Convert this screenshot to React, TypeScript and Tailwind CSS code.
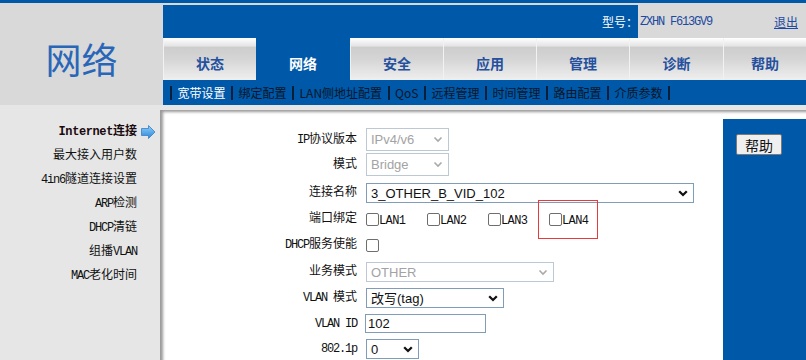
import React from "react";

const MONO = "font-['Liberation_Mono','Noto_Sans_CJK_SC',monospace]";
const SANS = "font-['Liberation_Sans','Noto_Sans_CJK_SC',sans-serif]";
const CJK = "font-['Noto_Sans_CJK_SC','Liberation_Sans',sans-serif]";

function M({ t, bold }: { t: string; bold?: boolean }) {
  const parts = t.split(/([\x20-\x7E]+)/).filter(Boolean);
  return (
    <>
      {parts.map((p, i) =>
        /[\x20-\x7E]/.test(p[0]) ? (
          <span key={i} className={bold ? "tracking-[-0.4px]" : "tracking-[-1.2px]"}>
            {p}
          </span>
        ) : (
          <span key={i}>{p}</span>
        )
      )}
    </>
  );
}

function Chevron({ disabled }: { disabled?: boolean }) {
  return disabled ? (
    <svg width="10" height="7" viewBox="0 0 10 7">
      <path d="M1.5 1.5 L5 5 L8.5 1.5" fill="none" stroke="#a9a9a9" strokeWidth="1.6" />
    </svg>
  ) : (
    <svg width="10" height="7" viewBox="0 0 10 7">
      <path d="M1.2 1.3 L5 5 L8.8 1.3" fill="none" stroke="#111" strokeWidth="2.3" />
    </svg>
  );
}

function Sel({ w, h, text, disabled }: { w: string; h: string; text: string; disabled?: boolean }) {
  return (
    <div
      className={`${w} ${h} ${SANS} flex items-center justify-between bg-white pl-[4px] pr-[5px] text-[13px] leading-none border ${
        disabled ? "border-[#bcc8d4] text-[#a3a3a3]" : "border-[#7f9db9] text-[#111]"
      }`}
    >
      <span>{text}</span>
      <Chevron disabled={disabled} />
    </div>
  );
}

function Box() {
  return <div className="w-[13px] h-[13px] shrink-0 rounded-[2px] border border-[#6e6e6e] bg-white" />;
}

function Row({ label, mt, h, children }: { label: string; mt: string; h: string; children: React.ReactNode }) {
  return (
    <div className={`flex items-center ${mt} ${h}`}>
      <div className={`w-[197px] text-right text-[12px] leading-[14px] text-[#111] ${MONO}`}>
        <M t={label} />
      </div>
      <div className="ml-[9px] flex items-center">{children}</div>
    </div>
  );
}

const tabs: { name: string; w: string; active?: boolean }[] = [
  { name: "状态", w: "w-[93px]" },
  { name: "网络", w: "w-[94px]", active: true },
  { name: "安全", w: "w-[93px]" },
  { name: "应用", w: "w-[93px]" },
  { name: "管理", w: "w-[93px]" },
  { name: "诊断", w: "w-[94px]" },
  { name: "帮助", w: "flex-1" },
];

const subnav = ["宽带设置", "绑定配置", "LAN侧地址配置", "QoS", "远程管理", "时间管理", "路由配置", "介质参数"];

const side = ["Internet连接", "最大接入用户数", "4in6隧道连接设置", "ARP检测", "DHCP清链", "组播VLAN", "MAC老化时间"];

function Arrow() {
  return (
    <svg width="15" height="14" viewBox="0 0 15 14">
      <defs>
        <linearGradient id="ag" x1="0" y1="0" x2="0" y2="1">
          <stop offset="0" stopColor="#8fd0fb" />
          <stop offset="1" stopColor="#2b86d8" />
        </linearGradient>
      </defs>
      <path d="M0.5 3.5 H7.5 V0.5 L14 7 L7.5 13.5 V10.5 H0.5 Z" fill="url(#ag)" stroke="#3a7fc4" strokeWidth="0.8" />
    </svg>
  );
}

export default function App() {
  return (
    <div className="w-[806px] h-[360px] overflow-hidden bg-[#e6e6e6] flex flex-col">
      <div className="h-[3px] bg-[#0058a8]" />
      <div className="h-[2px] bg-[#d9d9d9]" />
      {/* header */}
      <div className="flex h-[100px]">
        <div className={`w-[163px] bg-[#d9d9d9] flex justify-center pt-[33px] ${CJK}`}>
          <span className="text-[36px] leading-[40px] text-[#2a66b8]">网络</span>
        </div>
        <div className="flex-1 flex flex-col">
          <div className="h-[33px] bg-[#0058a8] flex items-center justify-end">
            <span className={`text-white text-[12px] ${CJK}`}>型号：</span>
            <div className="w-[168px] h-full bg-[#d9d9d9] flex items-center pl-[2px] pr-[8px]">
              <span className={`text-[12px] text-[#1d4aa0] ${MONO}`}>
                <M t="ZXHN F613GV9" />
              </span>
              <span className={`ml-auto text-[12px] text-[#1d4aa0] underline ${CJK}`}>退出</span>
            </div>
          </div>
          <div className="h-[42px] flex">
            {tabs.map((t) =>
              t.active ? (
                <div key={t.name} className={`${t.w} bg-[#0058a8] flex items-center justify-center pt-[8px]`}>
                  <span className={`text-[14px] font-bold text-white ${CJK}`}>{t.name}</span>
                </div>
              ) : (
                <div
                  key={t.name}
                  className={`${t.w} flex items-center justify-center pt-[8px] border-l border-[#f2f2f2] bg-[linear-gradient(to_bottom,#ffffff_0%,#e4e4e4_19%,#cdcdcd_22%,#d5d5d5_50%,#efefef_100%)]`}
                >
                  <span className={`text-[14px] font-bold text-[#24509e] ${CJK}`}>{t.name}</span>
                </div>
              )
            )}
          </div>
          <div className={`h-[25px] bg-[#0058a8] flex items-center pl-[7px] text-[12px] ${CJK}`}>
            <div className="w-[2px] h-[14px] bg-[#0b1e3a]" />
            {subnav.map((s, i) => (
              <React.Fragment key={s}>
                <span className={`mx-[5.5px] leading-none ${i === 0 ? "text-white" : "text-[#0a1628]"}`}>{s}</span>
                <div className="w-[2px] h-[14px] bg-[#0b1e3a]" />
              </React.Fragment>
            ))}
          </div>
        </div>
      </div>
      {/* body */}
      <div className="flex flex-1">
        <div className={`w-[160px] pt-[15px] flex flex-col text-[12px] text-[#111] ${MONO}`}>
          {side.map((s, i) => (
            <div key={s} className="h-[24px] flex items-center justify-end">
              <span className={i === 0 ? "font-bold text-[#1a0a10]" : ""}>
                <M t={s} bold={i === 0} />
              </span>
              <div className="w-[23px] pl-[4px] flex items-center">{i === 0 && <Arrow />}</div>
            </div>
          ))}
        </div>
        <div className="flex-1 pt-[5px] flex flex-col">
          <div className="flex-1 flex bg-white shadow-[inset_4px_3px_3px_-1px_rgba(0,0,0,0.4)]">
            <div className="relative flex-1 pt-[18px] flex flex-col">
              <Row label="IP协议版本" mt="mt-0" h="h-[23px]">
                <Sel w="w-[83px]" h="h-[23px]" text="IPv4/v6" disabled />
              </Row>
              <Row label="模式" mt="mt-[2px]" h="h-[23px]">
                <Sel w="w-[83px]" h="h-[23px]" text="Bridge" disabled />
              </Row>
              <Row label="连接名称" mt="mt-[7px]" h="h-[20px]">
                <Sel w="w-[328px]" h="h-[20px]" text="3_OTHER_B_VID_102" />
              </Row>
              <Row label="端口绑定" mt="mt-[7px]" h="h-[18px]">
                {["LAN1", "LAN2", "LAN3", "LAN4"].map((l) => (
                  <div key={l} className="w-[61px] flex items-center">
                    <Box />
                    <span className={`pt-[5px] text-[12px] leading-[13px] text-[#111] ${MONO} tracking-[-0.6px]`}>{l}</span>
                  </div>
                ))}
              </Row>
              <Row label="DHCP服务使能" mt="mt-[8px]" h="h-[18px]">
                <Box />
              </Row>
              <Row label="业务模式" mt="mt-[8px]" h="h-[20px]">
                <Sel w="w-[188px]" h="h-[20px]" text="OTHER" disabled />
              </Row>
              <Row label="VLAN 模式" mt="mt-[6px]" h="h-[20px]">
                <Sel w="w-[138px]" h="h-[20px]" text="改写(tag)" />
              </Row>
              <Row label="VLAN ID" mt="mt-[6px]" h="h-[19px]">
                <div className={`-ml-[1px] w-[121px] h-[19px] border border-[#7f9db9] bg-white flex items-center pl-[2px] text-[13px] leading-none text-[#111] ${SANS}`}>
                  102
                </div>
              </Row>
              <Row label="802.1p" mt="mt-[6px]" h="h-[20px]">
                <Sel w="w-[53px]" h="h-[20px]" text="0" />
              </Row>
              <div className="absolute left-[378px] top-[90px] w-[60px] h-[39px] border border-[#e8393c]" />
            </div>
            <div className="w-[83px] mt-[9px] bg-[#0058a8] pl-[13px] pt-[15px]">
              <div className={`w-[46px] h-[21px] bg-[#efefef] border border-[#7a7a7a] rounded-[2px] flex items-center justify-center text-[14px] leading-none text-[#111] ${CJK}`}>
                帮助
              </div>
            </div>
          </div>
        </div>
      </div>
    </div>
  );
}
